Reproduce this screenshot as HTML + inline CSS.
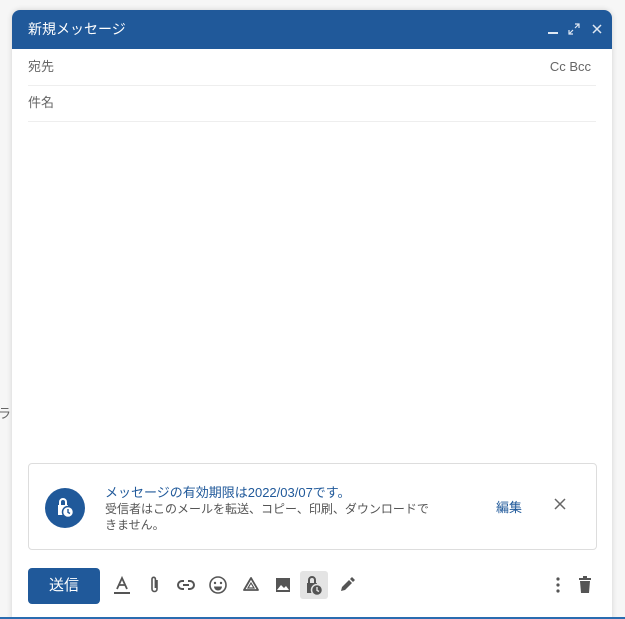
<!DOCTYPE html>
<html><head><meta charset="utf-8"><style>
*{margin:0;padding:0;box-sizing:border-box}
body{width:625px;height:619px;background:#f6f6f6;position:relative;overflow:hidden;font-family:"Liberation Sans","Noto Sans CJK JP",sans-serif}
.dlg{position:absolute;left:12px;top:10px;width:600px;height:609px;background:#fff;border-radius:8px 8px 0 0;box-shadow:0 0 6px rgba(0,0,0,.15)}
.hd{height:39px;background:#20599a;border-radius:8px 8px 0 0;color:#fff;font-size:14px;padding:9px 0 0 16px;position:relative}
.row{position:absolute;left:16px;right:16px;border-bottom:1px solid #eee;font-size:13px;color:#666}
.box{position:absolute;left:16px;top:453px;width:569px;height:87px;border:1px solid #ddd;border-radius:4px}
.send{position:absolute;left:16px;top:558px;width:72px;height:36px;background:#20599a;border-radius:4px;color:#fff;font-size:15px;text-align:center;line-height:36px}
.ic{position:absolute;top:565px}
</style></head><body>
<div style="position:absolute;left:-2px;top:403px;font-size:13px;color:#666">ラ</div>
<div class="dlg">
<div class="hd">新規メッセージ
<span style="position:absolute;right:54px;width:10px;height:2px;background:#dfe8f3;top:22px"></span>
<svg style="position:absolute;right:32px;top:13px" width="12" height="12" viewBox="0 0 12 12"><path d="M7 1h4v4M11 1L7 5M5 11H1V7M1 11l4-4" stroke="#dfe8f3" stroke-width="1.2" fill="none"/></svg>
<svg style="position:absolute;right:10px;top:14px" width="10" height="10" viewBox="0 0 10 10"><path d="M1 1l8 8M9 1L1 9" stroke="#dfe8f3" stroke-width="1.5"/></svg>
</div>
<div class="row" style="top:39px;height:37px;line-height:36px">宛先<span style="position:absolute;right:5px">Cc Bcc</span></div>
<div class="row" style="top:76px;height:36px;line-height:34px">件名</div>
<div class="box">
<div style="position:absolute;left:16px;top:24px;width:40px;height:40px;border-radius:50%;background:#20599a"></div>
<svg style="position:absolute;left:26px;top:33px" width="20" height="22" viewBox="0 0 20 22"><path d="M3 8h10v10H3z" fill="#fff"/><path d="M5 8V5a3 3 0 016 0v3" stroke="#fff" stroke-width="2" fill="none"/><circle cx="13" cy="15" r="5.5" fill="#fff" stroke="#20599a" stroke-width="1.5"/><path d="M13 12v3.3l2 1.2" stroke="#20599a" stroke-width="1.4" fill="none"/></svg>
<div style="position:absolute;left:76px;top:18px;font-size:13px;color:#20599a">メッセージの有効期限は2022/03/07です。</div>
<div style="position:absolute;left:76px;top:37px;width:360px;font-size:12px;color:#555;line-height:16px;white-space:nowrap">受信者はこのメールを転送、コピー、印刷、ダウンロードで<br>きません。</div>
<div style="position:absolute;left:467px;top:33px;font-size:13px;color:#20599a">編集</div>
<svg style="position:absolute;left:525px;top:34px" width="12" height="12" viewBox="0 0 12 12"><path d="M1 1l10 10M11 1L1 11" stroke="#666" stroke-width="1.5"/></svg>
</div>
<div class="send">送信</div>
<svg class="ic" style="left:100px" width="20" height="20" viewBox="0 0 20 20"><path d="M5 14L10 3l5 11M7 10h6" stroke="#555" stroke-width="1.8" fill="none"/><path d="M2 18h16" stroke="#555" stroke-width="2"/></svg>
<svg class="ic" style="left:133px" width="20" height="20" viewBox="0 0 20 20"><path d="M12 5v9a2.5 2.5 0 01-5 0V4a1.7 1.7 0 013.4 0v9" stroke="#555" stroke-width="1.6" fill="none"/></svg>
<svg class="ic" style="left:164px" width="20" height="20" viewBox="0 0 20 20"><path d="M8 6H6a4 4 0 000 8h2M12 6h2a4 4 0 010 8h-2M7 10h6" stroke="#555" stroke-width="2" fill="none"/></svg>
<svg class="ic" style="left:196px" width="20" height="20" viewBox="0 0 20 20"><circle cx="10" cy="10" r="8" stroke="#555" stroke-width="1.6" fill="none"/><circle cx="7" cy="8" r="1.2" fill="#555"/><circle cx="13" cy="8" r="1.2" fill="#555"/><path d="M6 11.5a4 4 0 008 0z" fill="#555"/></svg>
<svg class="ic" style="left:229px" width="20" height="20" viewBox="0 0 20 20"><path d="M10 3L3 15h14z" stroke="#555" stroke-width="1.8" fill="none" stroke-linejoin="round"/><path d="M10 8l-3 5h6z" stroke="#555" stroke-width="1.2" fill="none"/></svg>
<svg class="ic" style="left:261px" width="20" height="20" viewBox="0 0 20 20"><rect x="3" y="3" width="14" height="14" fill="#555"/><path d="M4 15l4-5 3 3 2-2 3 4z" fill="#fff"/></svg>
<div style="position:absolute;left:288px;top:561px;width:28px;height:28px;background:#e4e4e4;border-radius:3px"></div>
<svg class="ic" style="left:292px" width="20" height="22" viewBox="0 0 20 22"><path d="M3 8h10v10H3z" fill="#555"/><path d="M5 8V5a3 3 0 016 0v3" stroke="#555" stroke-width="2" fill="none"/><circle cx="13" cy="15" r="5.5" fill="#555" stroke="#e4e4e4" stroke-width="1.5"/><path d="M13 12v3.3l2 1.2" stroke="#e4e4e4" stroke-width="1.4" fill="none"/></svg>
<svg class="ic" style="left:325px" width="20" height="20" viewBox="0 0 20 20"><path d="M4 16l1-4 7-7 3 3-7 7zM13 4l2-2 3 3-2 2" fill="#555"/></svg>
<svg class="ic" style="left:540px" width="12" height="20" viewBox="0 0 12 20"><circle cx="6" cy="4" r="1.6" fill="#555"/><circle cx="6" cy="10" r="1.6" fill="#555"/><circle cx="6" cy="16" r="1.6" fill="#555"/></svg>
<svg class="ic" style="left:565px" width="16" height="20" viewBox="0 0 16 20"><path d="M2 4h12M6 2h4" stroke="#555" stroke-width="2"/><path d="M3 6h10l-1 12H4z" fill="#555"/></svg>
</div>
<div style="position:absolute;left:0;top:617px;width:625px;height:2px;background:#2a6cb0"></div>
</body></html>
